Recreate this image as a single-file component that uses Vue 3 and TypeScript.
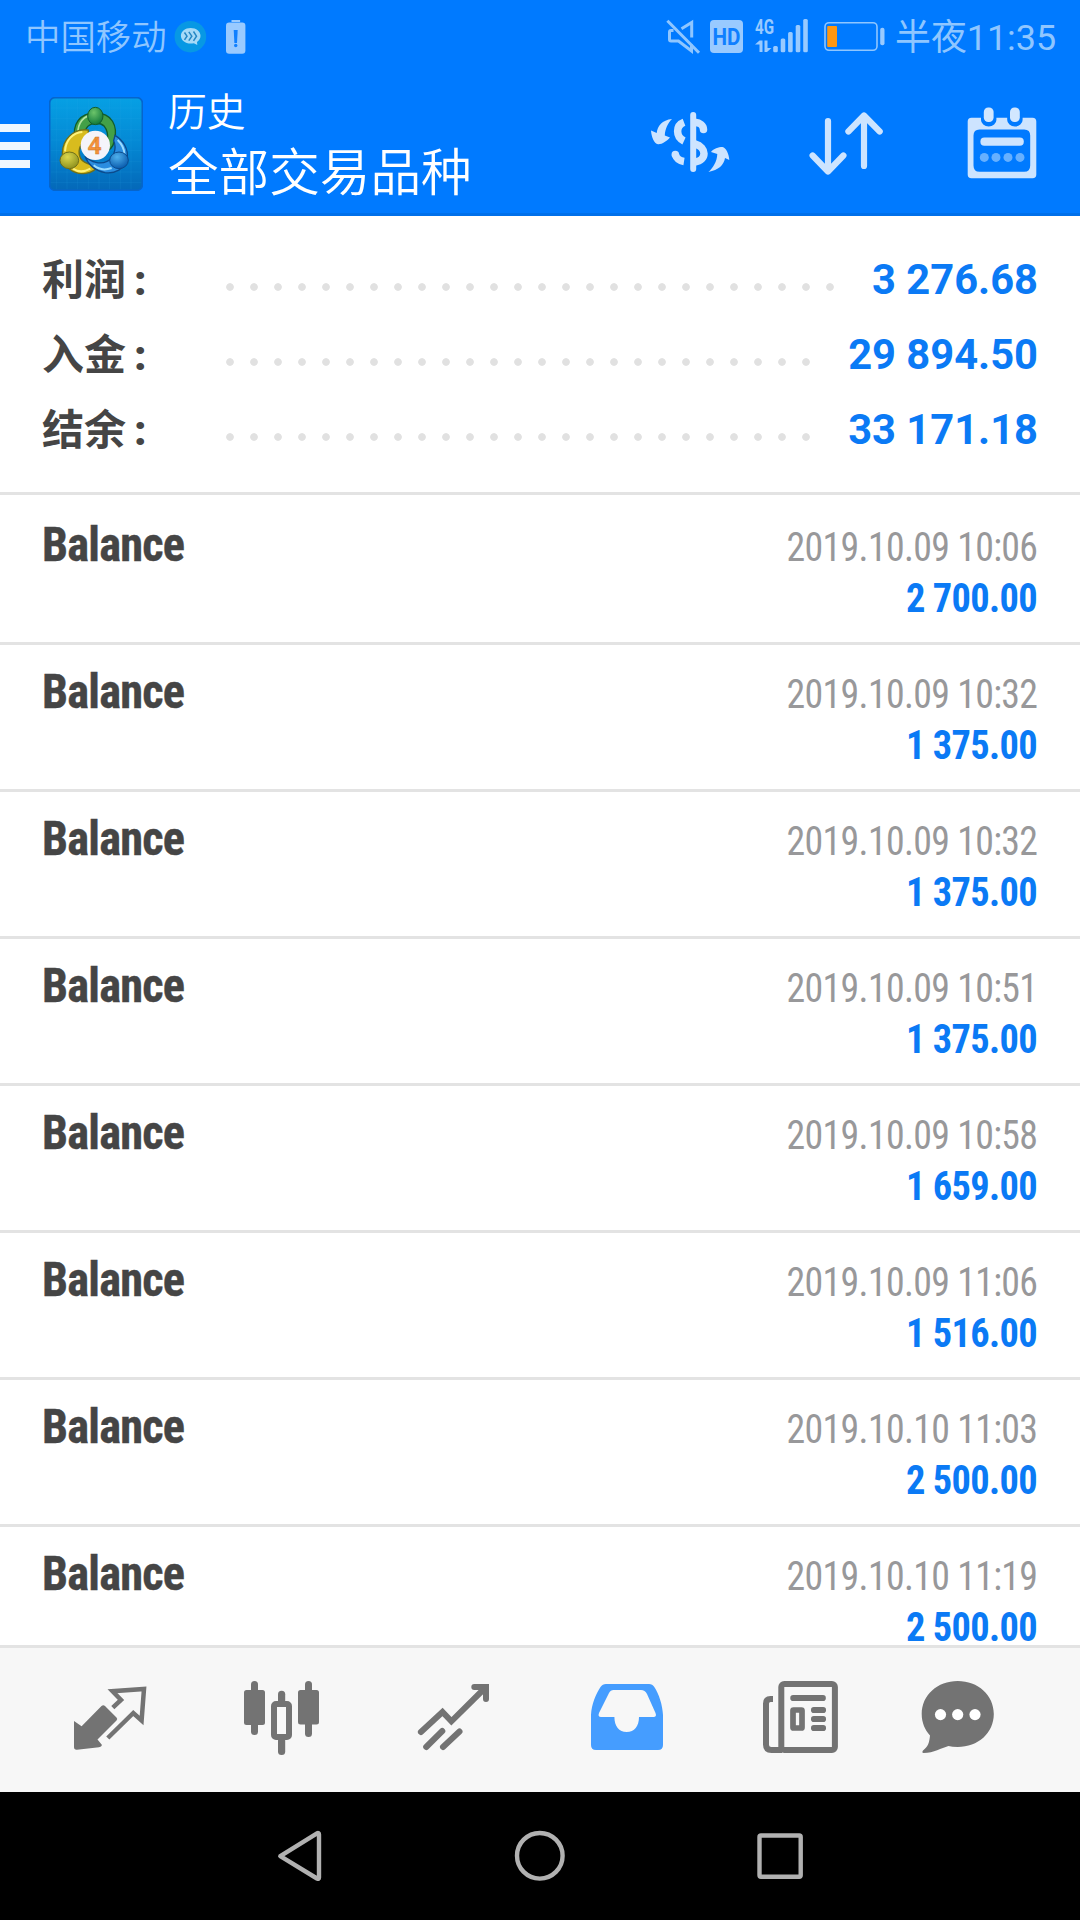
<script setup lang="ts">
interface Total {
  label: string
  value: string
}

interface Deal {
  name: string
  time: string
  amount: string
}

const totals: Total[] = [
  { label: '利润', value: '3 276.68' },
  { label: '入金', value: '29 894.50' },
  { label: '结余', value: '33 171.18' },
]

const deals: Deal[] = [
  { name: 'Balance', time: '2019.10.09 10:06', amount: '2 700.00' },
  { name: 'Balance', time: '2019.10.09 10:32', amount: '1 375.00' },
  { name: 'Balance', time: '2019.10.09 10:32', amount: '1 375.00' },
  { name: 'Balance', time: '2019.10.09 10:51', amount: '1 375.00' },
  { name: 'Balance', time: '2019.10.09 10:58', amount: '1 659.00' },
  { name: 'Balance', time: '2019.10.09 11:06', amount: '1 516.00' },
  { name: 'Balance', time: '2019.10.10 11:03', amount: '2 500.00' },
  { name: 'Balance', time: '2019.10.10 11:19', amount: '2 500.00' },
]
</script>

<template>
  <div class="screen">
    <header class="header">
      <div class="status">
        <span class="carrier">中国移动</span>
        <svg class="status-left" width="78" height="44" viewBox="172 15 78 44">
          <circle cx="190.4" cy="36.7" r="15.8" fill="#0798e4" />
          <path d="M190.7 28c5.6 0 9.8 3.4 9.8 7.8 0 2.7-1.3 4.8-3.5 6.100l.3 3.100-3.500-1.800c-1 .3-2 .4-3.100.4-5.600 0-9.800-3.400-9.800-7.800s4.200-7.800 9.800-7.800z" fill="#a5daf7" />
          <path d="M184.500 32.500l2.500 3.700-2.500 3.700M188.800 31.800l3 4.400-3 4.400M193.500 31.500l3 4.700-3 4.700" fill="none" stroke="#2387c4" stroke-width="1.500" />
          <path d="M231.500 20h8.600v2h-8.600z" fill="#99caff" />
          <rect x="226" y="22.600" width="19.400" height="31.200" rx="3.200" fill="#99caff" />
          <path d="M233.700 30h4l-.7 13h-2.600z" fill="#1080ff" />
          <circle cx="235.700" cy="45.500" r="1.700" fill="#1080ff" />
        </svg>
        <svg class="status-right" width="226" height="44" viewBox="662 15 226 44">
          <g fill="none" stroke="#8fc6ff" stroke-width="3">
            <path d="M667.400 20.700L699 52.700" />
            <path d="M673.500 30.500H671q-1.500 0-1.500 1.500v7.500q0 1.500 1.500 1.500h7.500L691.500 51v-6.500" />
            <path d="M681.500 28.800L691.700 22.500V37.500" />
          </g>
          <rect x="710" y="20" width="33" height="33" rx="4" fill="#99caff" />
          <text class="hd" x="726.500" y="44.500" text-anchor="middle" textLength="28" lengthAdjust="spacingAndGlyphs">HD</text>
          <text class="net" x="755" y="33.800" textLength="19" lengthAdjust="spacingAndGlyphs">4G</text>
          <g fill="#99caff">
            <path d="M755 44.500l4.500-4h3V52h-3v-7.500zM764.500 40.500h3v7.500h4l-4.500 4h-2.500z" />
            <rect x="773.200" y="46" width="4.600" height="6.300" rx="1.500" />
            <rect x="780.700" y="38.500" width="4.600" height="13.800" rx="1.500" />
            <rect x="788.100" y="32" width="4.600" height="20.300" rx="1.500" />
            <rect x="795.700" y="25" width="4.600" height="27.300" rx="1.500" />
            <rect x="803.200" y="19" width="4.600" height="33.300" rx="1.500" />
            <rect x="880.200" y="27.700" width="4.300" height="17.600" rx="2" />
          </g>
          <rect x="825" y="22.700" width="52" height="27.600" rx="4" fill="none" stroke="#8fc6ff" stroke-width="1.600" />
          <rect x="827.200" y="26" width="9.800" height="21" rx="1" fill="#ff9711" />
        </svg>
        <span class="clock">半夜11:35</span>
      </div>

      <div class="bar">
        <div class="menu"><i></i><i></i><i></i></div>
        <svg class="logo" width="94" height="94" viewBox="58 51 282 282">
          <defs>
            <linearGradient id="tile" x1="0" y1="0" x2="0" y2="1">
              <stop offset="0" stop-color="#06a0e4" />
              <stop offset=".5" stop-color="#0488d4" />
              <stop offset="1" stop-color="#0468b8" />
            </linearGradient>
            <radialGradient id="gr" cx=".4" cy=".3" r=".7">
              <stop offset="0" stop-color="#6cc46a" />
              <stop offset="1" stop-color="#127a3c" />
            </radialGradient>
            <radialGradient id="ye" cx=".4" cy=".3" r=".7">
              <stop offset="0" stop-color="#dcd84c" />
              <stop offset="1" stop-color="#8f9220" />
            </radialGradient>
            <radialGradient id="bl" cx=".4" cy=".3" r=".7">
              <stop offset="0" stop-color="#4fb0ec" />
              <stop offset="1" stop-color="#0a5cae" />
            </radialGradient>
          </defs>
          <rect x="60" y="53" width="278" height="278" rx="16" fill="url(#tile)" stroke="#0665cc" stroke-width="5" />
          <g fill="none" stroke="#35a8e4" stroke-opacity=".2" stroke-width="2">
            <path d="M80 56v272M112 56v272M144 56v272M176 56v272M208 56v272M240 56v272M272 56v272M304 56v272M63 84h272M63 116h272M63 148h272M63 180h272M63 212h272M63 244h272M63 276h272M63 308h272" />
          </g>
          <path d="M136 182C126 132 150 99 198 99c48 0 68 38 56 84-4 20-18 32-36 36 18-26 22-60 6-80-14-14-44-12-54 6-6 10-6 20-4 30z" fill="#43a047" stroke="#125c2c" stroke-width="4" />
          <path d="M146 174c-6-34 8-62 36-68" fill="none" stroke="#b5e3a0" stroke-width="5" />
          <path d="M176 150c-44-6-78 28-78 70 0 40 34 66 70 60 18-2 34-14 44-28-26 6-56-2-62-24-6-22 4-40 26-54z" fill="#d8bc1e" stroke="#70701a" stroke-width="4" />
          <path d="M106 214c2-34 24-56 52-58M130 266c14 10 34 10 52 0" fill="none" stroke="#fff27a" stroke-width="6" />
          <path d="M256 166c24 14 42 42 36 70-8 32-36 46-66 42-30-6-50-22-60-50 20 20 46 26 66 16 20-8 30-40 20-62z" fill="#2a8de0" stroke="#0b4a8c" stroke-width="4" />
          <path d="M264 180c12 12 20 26 20 42M192 256c14 12 32 16 54 8" fill="none" stroke="#9bdcff" stroke-width="6" />
          <ellipse cx="197" cy="108" rx="23" ry="26" fill="url(#gr)" stroke="#125c2c" stroke-width="3" />
          <ellipse cx="119" cy="241" rx="28" ry="25" fill="url(#ye)" stroke="#70701a" stroke-width="3" />
          <ellipse cx="268" cy="241" rx="28" ry="25" fill="url(#bl)" stroke="#0b4a8c" stroke-width="3" />
          <circle cx="197" cy="196" r="44" fill="#f4f4fa" />
          <text class="four" x="195" y="222" text-anchor="middle">4</text>
        </svg>
        <div class="titles">
          <div class="title">历史</div>
          <div class="subtitle">全部交易品种</div>
        </div>
        <div class="actions">
          <svg width="80" height="74" viewBox="650 105 80 74">
            <g fill="none" stroke="#cde4ff" stroke-width="7.500">
              <path d="M693.200 115V169" stroke-width="6" stroke-linecap="round" />
              <path d="M684 122.300C675.500 125.500 675.500 137 684 141" />
              <path d="M675.300 154.500C676.500 158.500 679.500 160.800 684 161.500" />
              <path d="M675.300 154.500v.1" stroke-linecap="round" />
              <path d="M695 122.300C700 122.800 703.500 125.500 703.500 129.500" stroke-linecap="round" />
              <path d="M695 144C707 147 707 160.500 695 162" />
            </g>
            <path d="M672 119C662 120 657.500 126 656.700 133L651 130.500C651.500 137 654 143.500 658 144.200C662 144.500 667 141 670 137.500L664.800 135.500C665 129 668 123 672 119z" fill="#cde4ff" />
            <path d="M708.400 172C718.500 170 724 165 725 158L729.300 160C729 154 726 147.500 722.500 147C718.500 147 713.500 148.500 711 152L717.300 154C717 161.500 713 168 708.400 172z" fill="#cde4ff" />
          </svg>
          <svg class="sort" width="76" height="74" viewBox="808 105 76 74" fill="none" stroke="#cde4ff" stroke-width="6.200" stroke-linecap="round" stroke-linejoin="round">
            <path d="M828 121V171M812.600 155.500L828 171.500L843.400 155.500M864 166V115.500M848.400 131.500L864 115.500L879.700 131.500" />
          </svg>
          <svg width="74" height="76" viewBox="965 105 74 76">
            <path fill-rule="evenodd" fill="#cde4ff" d="M971.500 117.700H981V120a7.700 6.500 0 0 0 15.400 0V117.700H1007.200V120a7.700 6.500 0 0 0 15.400 0V117.700H1032.500q3.800 0 3.800 3.800V174.500q0 3.800-3.800 3.800H971.500q-3.800 0-3.800-3.800V121.500q0-3.800 3.800-3.800zM979.500 129.500q-6 0-6 6V165.500q0 6.300 6 6.300H1024.200q6 0 6-6.300V135.500q0-6-6-6z" />
            <rect x="983.800" y="107.500" width="9.800" height="14.500" rx="4.500" fill="#d2e7ff" />
            <rect x="1010" y="107.500" width="9.800" height="14.500" rx="4.500" fill="#d2e7ff" />
            <rect x="980.400" y="137.500" width="43.400" height="8.300" rx="4" fill="#cde4ff" />
            <g fill="#66b0ff">
              <circle cx="984.300" cy="157.400" r="4.500" />
              <circle cx="996" cy="157.400" r="4.500" />
              <circle cx="1008" cy="157.400" r="4.500" />
              <circle cx="1020" cy="157.400" r="4.500" />
            </g>
          </svg>
        </div>
      </div>
    </header>

    <section class="totals">
      <div v-for="t in totals" :key="t.label" class="total">
        <span class="label">{{ t.label }}<b class="colon">:</b></span>
        <span class="leader"></span>
        <span class="value">{{ t.value }}</span>
      </div>
    </section>

    <main class="deals">
      <div v-for="(d, i) in deals" :key="i" class="deal">
        <span class="name">{{ d.name }}</span>
        <div class="info">
          <span class="time">{{ d.time }}</span>
          <span class="amount">{{ d.amount }}</span>
        </div>
      </div>
    </main>

    <nav class="tabs">
      <svg width="80" height="90" viewBox="70 1672 80 90">
        <path d="M74 1721L81.600 1726.300L101.500 1706Q103.300 1704.300 105 1706L116.500 1717.500Q118 1719 116.500 1720.500L97.500 1739.500L102 1745Q101.500 1747 99 1747.300L77 1749.700Q74 1750 74 1747z" fill="#737373" />
        <path d="M112.800 1707.700L121 1700L112.500 1691.200L144 1689L141.600 1720.500L133.300 1713L107.800 1738" fill="none" stroke="#737373" stroke-width="4.500" />
      </svg>
      <svg width="80" height="90" viewBox="241 1672 80 90" fill="#737373">
        <rect x="244" y="1690" width="21" height="35" rx="2.500" />
        <rect x="251" y="1681" width="7" height="54" rx="3.500" />
        <rect x="298" y="1690" width="21" height="34.500" rx="2.500" />
        <rect x="305" y="1681" width="7" height="56" rx="3.500" />
        <rect x="278" y="1690.700" width="7.200" height="14" rx="3.500" />
        <rect x="278" y="1737" width="7.200" height="18" rx="3.500" />
        <rect x="274" y="1704" width="15" height="33" rx="2" fill="#f7f7f7" stroke="#737373" stroke-width="6" />
      </svg>
      <svg width="80" height="90" viewBox="413 1672 80 90" fill="none" stroke="#737373" stroke-width="6" stroke-linecap="round">
        <path d="M420.900 1732L442.500 1712L451.400 1721.300L484.500 1688.500M474.300 1687H486V1699" stroke-linejoin="miter" />
        <path d="M426.200 1747L442.300 1731M443 1747L459.500 1731.500" />
      </svg>
      <svg width="80" height="90" viewBox="587 1672 80 90">
        <path fill-rule="evenodd" fill="#459dff" d="M591 1715C591.500 1704 596 1694 600.500 1687Q602.500 1684 606 1684H649Q652.500 1684 654.300 1687C659 1694 662.500 1705 663 1715V1745Q663 1750 658 1750H596Q591 1750 591 1745zM613.500 1690Q610.500 1690 609 1693L599 1713Q597.500 1717 601 1717H614.400C614.400 1726 619 1732 626.700 1732S639 1726 639 1717H653.500Q657 1717 655.500 1713L647 1694Q645 1690 641 1690z" />
      </svg>
      <svg width="80" height="90" viewBox="760 1672 80 90">
        <g fill="none" stroke="#737373">
          <path d="M773 1699H770.500Q766 1699 766 1703.500V1744.500Q766 1750 771.500 1750H782" stroke-width="6" />
          <rect x="781.300" y="1684" width="53.600" height="66" rx="3" stroke-width="6" />
          <rect x="793" y="1710" width="9" height="18" rx=".5" stroke-width="5.700" />
        </g>
        <g fill="#737373">
          <rect x="790.300" y="1695" width="35.500" height="6" rx="2.800" />
          <rect x="811" y="1707" width="15" height="6" rx="2.800" />
          <rect x="811" y="1716" width="15" height="6" rx="2.800" />
          <rect x="811" y="1725" width="15" height="6" rx="2.800" />
        </g>
      </svg>
      <svg width="80" height="90" viewBox="918 1672 80 90">
        <path d="M957.700 1681C978 1681 993.800 1695 993.800 1714S978 1747 957.700 1747Q952 1747 948.500 1746C941 1748 934 1753 923.500 1753Q921.500 1752.500 923 1750.500C928 1747 929.500 1742 930 1735.500C925 1730 921.700 1722.500 921.700 1714C921.700 1695 937.500 1681 957.700 1681z" fill="#737373" />
        <g fill="#fff">
          <circle cx="940.500" cy="1714.600" r="5.600" />
          <circle cx="957.700" cy="1714.600" r="5.600" />
          <circle cx="975" cy="1714.600" r="5.600" />
        </g>
      </svg>
    </nav>

    <footer class="softkeys">
      <svg width="60" height="60" viewBox="270 1826 60 60">
        <path d="M280.300 1856.200L317 1833.300Q319 1832.500 319 1834.500V1877.500Q319 1879.500 317 1878.500z" />
      </svg>
      <svg width="60" height="60" viewBox="510 1826 60 60"><circle cx="539.800" cy="1855.800" r="22.800" /></svg>
      <svg width="60" height="60" viewBox="750 1826 60 60"><rect x="759.500" y="1835.500" width="41.200" height="41.200" rx="1.500" /></svg>
    </footer>
  </div>
</template>

<style>
body {
  margin: 0;
  background: #000;
}
</style>

<style scoped>
.screen {
  width: 1080px;
  height: 1920px;
  display: flex;
  flex-direction: column;
  overflow: hidden;
  background: #fff;
  font-family: Roboto, "Noto Sans CJK SC", sans-serif;
}
svg {
  display: block;
  flex: none;
}
.header {
  flex: none;
  height: 216px;
  box-sizing: border-box;
  background: #007aff;
  border-bottom: 3px solid #0070ea;
}
.status {
  height: 74px;
  display: flex;
  align-items: center;
  padding-left: 25px;
  color: #8fc6ff;
  font-size: 35.400px;
  line-height: 44px;
  white-space: nowrap;
  font-weight: 350;
}
.carrier {
  width: 147px;
  padding-top: 1px;
}
.status-left {
  margin-right: 412px;
}
.clock {
  margin-left: 7px;
  padding-top: 1px;
  font-size: 35.900px;
  font-weight: 400;
}
.hd {
  font: bold 24px Roboto, sans-serif;
  fill: #0f7fff;
}
.net {
  font: bold 20px Roboto, sans-serif;
  fill: #99caff;
}
.bar {
  height: 139px;
  display: flex;
  align-items: flex-start;
}
.menu {
  width: 30px;
  margin: 50px 19px 0 0;
  display: flex;
  flex-direction: column;
  gap: 10px;
}
.menu i {
  height: 8px;
  background: #eff7ff;
}
.logo {
  margin-top: 23px;
}
.four {
  font: bold 74px Roboto, sans-serif;
  fill: #f5933a;
  stroke: #c9752c;
  stroke-width: 1px;
}
.titles {
  margin-left: 25px;
  width: 321px;
  color: #fff;
  white-space: nowrap;
  font-weight: 350;
}
.title {
  margin-top: 13px;
  font-size: 38.800px;
  line-height: 52px;
}
.subtitle {
  font-size: 50.600px;
  line-height: 70px;
}
.actions {
  flex: 1;
  display: flex;
  align-items: flex-start;
  padding: 31px 0 0 161px;
}
.sort {
  margin: 0 81px 0 78px;
}
.totals {
  flex: none;
  height: 279px;
  box-sizing: border-box;
  border-bottom: 3px solid #e3e3e3;
  padding: 26px 43px 0 42px;
}
.total {
  height: 75px;
  display: flex;
  align-items: center;
}
.label {
  width: 176px;
  margin-top: -2px;
  font: bold 42px/75px "Noto Sans CJK SC", sans-serif;
  color: #454545;
}
.colon {
  font-family: Roboto, sans-serif;
  margin-left: 8px;
}
.leader {
  flex: 1;
  height: 24px;
  margin: 15px 30px 0 0;
  background: radial-gradient(circle, #e1e1e1 3.400px, transparent 4.200px) 0 0 / 24px 24px repeat-x;
}
.value {
  margin-right: -1px;
  font-size: 41.700px;
  line-height: 75px;
  font-weight: 700;
  color: #0b7af5;
}
.deals {
  flex: none;
  height: 1150px;
  padding-top: 3px;
  box-sizing: border-box;
  overflow: hidden;
}
.deal {
  height: 147px;
  box-sizing: border-box;
  border-bottom: 3px solid #e3e3e3;
  padding: 19px 43px 0 42px;
  display: flex;
  justify-content: space-between;
  white-space: nowrap;
  font-family: "Roboto Condensed", Roboto, sans-serif;
  font-stretch: 75%;
}
.name {
  font-size: 48px;
  line-height: 56px;
  letter-spacing: -.8px;
  font-weight: 700;
  color: #454545;
  -webkit-text-stroke: .4px #454545;
  transform: scaleX(.965);
  transform-origin: 0 0;
}
.info {
  display: flex;
  flex-direction: column;
  align-items: flex-end;
  padding-top: 5px;
}
.time,
.amount {
  font-size: 40px;
  line-height: 51px;
  letter-spacing: -.7px;
  transform-origin: 100% 0;
}
.time {
  color: #98989a;
  transform: scaleX(.945);
}
.amount {
  font-weight: 700;
  color: #0b7af5;
  transform: translateX(.5px) scaleX(.96);
}
.tabs {
  flex: none;
  height: 147px;
  box-sizing: border-box;
  border-top: 3px solid #e3e3e3;
  background: #f7f7f7;
  padding: 24px 0 0 70px;
  display: grid;
  grid-template-columns: 171px 172px 174px 173px 158px 80px;
}
.softkeys {
  flex: none;
  height: 128px;
  background: #000;
  display: flex;
  justify-content: center;
  align-items: center;
  gap: 180px;
  fill: none;
  stroke: #b1b1b1;
  stroke-width: 4.400px;
  stroke-linejoin: round;
}
</style>
